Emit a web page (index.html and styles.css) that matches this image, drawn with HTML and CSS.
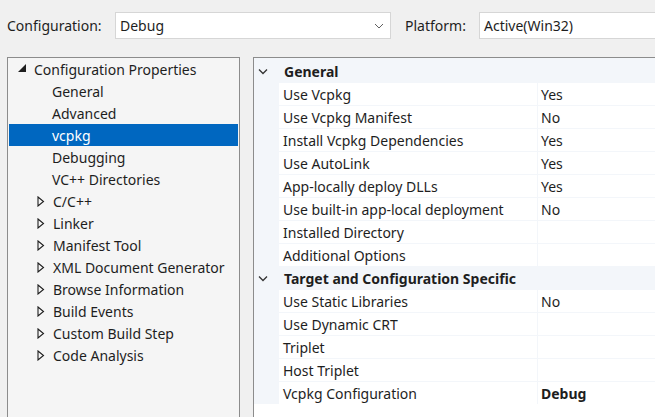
FILE: index.html
```html
<!DOCTYPE html>
<html>
<head>
<meta charset="utf-8">
<link rel="stylesheet" href="styles.css">
</head>
<body>
<div class="toolbar">
  <span class="label">Configuration:</span>
  <div class="combo combo-config">
    <span>Debug</span>
    <svg class="drop" width="10" height="6" viewBox="0 0 10 6"><path d="M1 1 L5 5 L9 1" fill="none" stroke="#606060" stroke-width="1"/></svg>
  </div>
  <span class="label label-platform">Platform:</span>
  <div class="combo combo-platform"><span>Active(Win32)</span></div>
</div>
<div class="main">
  <div class="tree">
    <div class="node root">
      <svg class="exp" width="9" height="9" viewBox="0 0 9 9"><path d="M8 0 L8 8 L0 8 Z" fill="#1e1e1e"/></svg>
      <span>Configuration Properties</span>
    </div>
    <div class="node child">General</div>
    <div class="node child">Advanced</div>
    <div class="node child selected">vcpkg</div>
    <div class="node child">Debugging</div>
    <div class="node child">VC++ Directories</div>
    <div class="node child col"><svg class="tri" width="8" height="11" viewBox="0 0 8 11"><path d="M1 1 L6.5 5.5 L1 10 Z" fill="none" stroke="#1e1e1e" stroke-width="1.1"/></svg><span>C/C++</span></div>
    <div class="node child col"><svg class="tri" width="8" height="11" viewBox="0 0 8 11"><path d="M1 1 L6.5 5.5 L1 10 Z" fill="none" stroke="#1e1e1e" stroke-width="1.1"/></svg><span>Linker</span></div>
    <div class="node child col"><svg class="tri" width="8" height="11" viewBox="0 0 8 11"><path d="M1 1 L6.5 5.5 L1 10 Z" fill="none" stroke="#1e1e1e" stroke-width="1.1"/></svg><span>Manifest Tool</span></div>
    <div class="node child col"><svg class="tri" width="8" height="11" viewBox="0 0 8 11"><path d="M1 1 L6.5 5.5 L1 10 Z" fill="none" stroke="#1e1e1e" stroke-width="1.1"/></svg><span>XML Document Generator</span></div>
    <div class="node child col"><svg class="tri" width="8" height="11" viewBox="0 0 8 11"><path d="M1 1 L6.5 5.5 L1 10 Z" fill="none" stroke="#1e1e1e" stroke-width="1.1"/></svg><span>Browse Information</span></div>
    <div class="node child col"><svg class="tri" width="8" height="11" viewBox="0 0 8 11"><path d="M1 1 L6.5 5.5 L1 10 Z" fill="none" stroke="#1e1e1e" stroke-width="1.1"/></svg><span>Build Events</span></div>
    <div class="node child col"><svg class="tri" width="8" height="11" viewBox="0 0 8 11"><path d="M1 1 L6.5 5.5 L1 10 Z" fill="none" stroke="#1e1e1e" stroke-width="1.1"/></svg><span>Custom Build Step</span></div>
    <div class="node child col"><svg class="tri" width="8" height="11" viewBox="0 0 8 11"><path d="M1 1 L6.5 5.5 L1 10 Z" fill="none" stroke="#1e1e1e" stroke-width="1.1"/></svg><span>Code Analysis</span></div>
  </div>
  <div class="props">
    <div class="grid">
      <div class="cat"><svg class="chev" width="10" height="6" viewBox="0 0 10 6"><path d="M1 0.5 L5 4.5 L9 0.5" fill="none" stroke="#333" stroke-width="1.3"/></svg><span>General</span></div>
      <div class="row"><div class="name">Use Vcpkg</div><div class="val">Yes</div></div>
      <div class="row"><div class="name">Use Vcpkg Manifest</div><div class="val">No</div></div>
      <div class="row"><div class="name">Install Vcpkg Dependencies</div><div class="val">Yes</div></div>
      <div class="row"><div class="name">Use AutoLink</div><div class="val">Yes</div></div>
      <div class="row"><div class="name">App-locally deploy DLLs</div><div class="val">Yes</div></div>
      <div class="row"><div class="name">Use built-in app-local deployment</div><div class="val">No</div></div>
      <div class="row"><div class="name">Installed Directory</div><div class="val"></div></div>
      <div class="row"><div class="name">Additional Options</div><div class="val"></div></div>
      <div class="cat"><svg class="chev" width="10" height="6" viewBox="0 0 10 6"><path d="M1 0.5 L5 4.5 L9 0.5" fill="none" stroke="#333" stroke-width="1.3"/></svg><span>Target and Configuration Specific</span></div>
      <div class="row"><div class="name">Use Static Libraries</div><div class="val">No</div></div>
      <div class="row"><div class="name">Use Dynamic CRT</div><div class="val"></div></div>
      <div class="row"><div class="name">Triplet</div><div class="val"></div></div>
      <div class="row"><div class="name">Host Triplet</div><div class="val"></div></div>
      <div class="row"><div class="name">Vcpkg Configuration</div><div class="val bold">Debug</div></div>
    </div>
  </div>
</div>
</body>
</html>
```
FILE: styles.css
```css
html, body {
  margin: 0;
  padding: 0;
  height: 100%;
  overflow: hidden;
}
body {
  background: #f0f0f0;
  font-family: "Noto Sans", "Open Sans", sans-serif;
  font-size: 14px;
  color: #1e1e1e;
  display: flex;
  flex-direction: column;
}
.toolbar {
  display: flex;
  align-items: center;
  height: 51px;
  flex: none;
  padding-left: 7px;
}
.label {
  width: 108px;
}
.label-platform {
  width: 74px;
  margin-left: 14px;
}
.combo {
  box-sizing: border-box;
  height: 27px;
  background: #fff;
  border: 1px solid #d6d6d6;
  display: flex;
  align-items: center;
  padding-left: 4px;
}
.combo-config {
  width: 276px;
  justify-content: space-between;
  padding-right: 6px;
}
.combo-platform {
  flex: 1;
  border-right: none;
}
.drop { display: block; }
.main {
  display: flex;
  margin-top: 6px;
  flex: 1;
  min-height: 0;
}
.tree {
  box-sizing: border-box;
  margin-left: 7px;
  width: 233px;
  border: 1px solid #8c8c8c;
  border-bottom: none;
  background: #f5f5f5;
  padding: 0 1px;
}
.node {
  height: 22px;
  display: flex;
  align-items: center;
  white-space: nowrap;
}
.root { padding-left: 9px; }
.root .exp { margin-right: 7px; margin-top: -1px; }
.child { padding-left: 43px; }
.child.col { padding-left: 28px; }
.tri { margin-right: 8px; }
.selected {
  background: #0067c0;
  color: #fff;
}
.props {
  flex: 1;
  margin-left: 13px;
  border-top: 1px solid #8c8c8c;
  border-left: 1px solid #8c8c8c;
  background: #fff;
}
.grid {
  background: #f3f6fa;
  padding-top: 2px;
}
.cat {
  height: 23px;
  display: flex;
  align-items: center;
  font-weight: bold;
  padding-left: 4px;
}
.chev { margin-right: 16px; }
.row {
  display: grid;
  grid-template-columns: 258px 1fr;
  column-gap: 1px;
  margin-left: 25px;
  height: 22px;
  margin-bottom: 1px;
}
.name, .val {
  background: #fff;
  display: flex;
  align-items: center;
  white-space: nowrap;
  overflow: hidden;
}
.name { padding-left: 4px; }
.val { padding-left: 3px; }
.bold { font-weight: bold; }
```
